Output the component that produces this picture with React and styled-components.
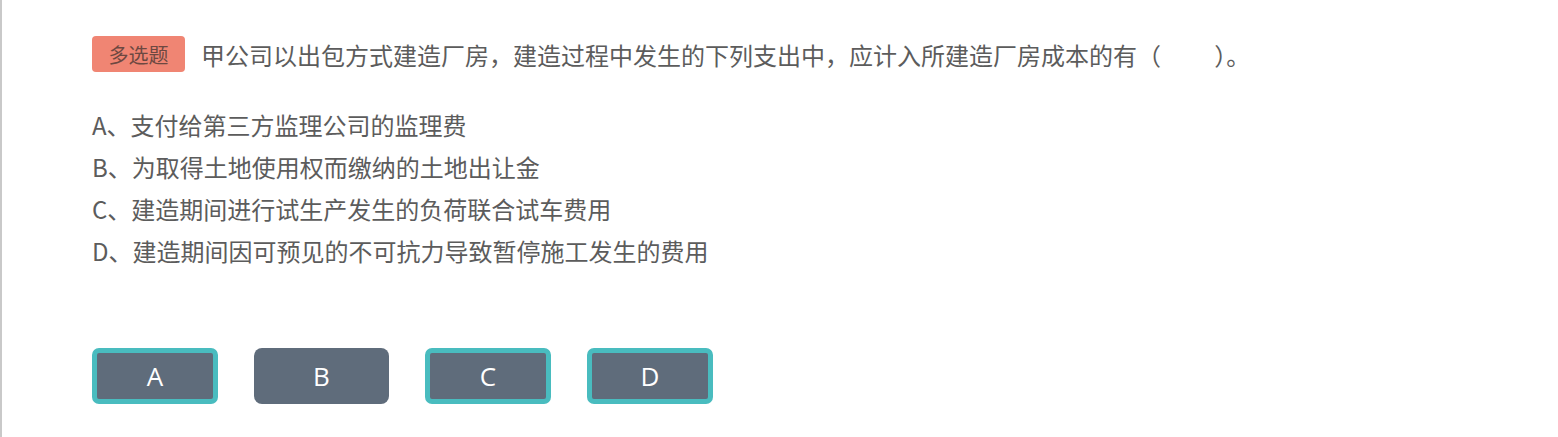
import React from 'react';
import styled, { createGlobalStyle } from 'styled-components';

const GlobalStyle = createGlobalStyle`
  html, body {
    margin: 0;
    padding: 0;
    background: #fff;
  }

  body {
    font-family: "Noto Sans CJK SC", "Noto Sans", sans-serif;
  }
`;

const Page = styled.div`
  box-sizing: border-box;
  height: 437px;
  border-left: 2px solid #c9c9c9;
  padding: 36px 0 0 90px;
`;

const Header = styled.div`
  display: flex;
  align-items: center;
  gap: 16px;
  height: 36px;
`;

const Tag = styled.span`
  display: flex;
  align-items: center;
  justify-content: center;
  width: 93px;
  height: 36px;
  border-radius: 4px;
  background: #f08573;
  color: #6d4841;
  font-size: 20px;
`;

const Question = styled.p`
  margin: 0;
  color: #5c5c5c;
  font-size: 24px;
  white-space: pre;
`;

const Options = styled.ul`
  margin: 32px 0 0;
  padding: 0;

  li {
    list-style: none;
    height: 42px;
    line-height: 42px;
    color: #5c5c5c;
    font-size: 24px;
  }
`;

const Answers = styled.div`
  display: flex;
  gap: 36px;
  margin-top: 76px;
`;

const Answer = styled.button`
  box-sizing: border-box;
  width: ${(p) => (p.selected ? 126 : 135)}px;
  height: 56px;
  padding: 0;
  border: ${(p) => (p.selected ? '5px solid #49bcbf' : 'none')};
  border-radius: ${(p) => (p.selected ? 7 : 8)}px;
  background: #5f6c7b;
  color: #fff;
  font-family: "Open Sans", sans-serif;
  font-size: 26px;
  cursor: pointer;
`;

const options = [
  'A、支付给第三方监理公司的监理费',
  'B、为取得土地使用权而缴纳的土地出让金',
  'C、建造期间进行试生产发生的负荷联合试车费用',
  'D、建造期间因可预见的不可抗力导致暂停施工发生的费用',
];

const answers = [
  { key: 'A', selected: true },
  { key: 'B', selected: false },
  { key: 'C', selected: true },
  { key: 'D', selected: true },
];

const App = () => {
  return (
    <Page>
      <GlobalStyle />
      <Header>
        <Tag>多选题</Tag>
        <Question>
          {'甲公司以出包方式建造厂房，建造过程中发生的下列支出中，应计入所建造厂房成本的有（\u3000\u3000 ）。'}
        </Question>
      </Header>
      <Options>
        {options.map((text) => (
          <li key={text}>{text}</li>
        ))}
      </Options>
      <Answers>
        {answers.map((a) => (
          <Answer key={a.key} selected={a.selected}>
            {a.key}
          </Answer>
        ))}
      </Answers>
    </Page>
  );
};

export default App;
